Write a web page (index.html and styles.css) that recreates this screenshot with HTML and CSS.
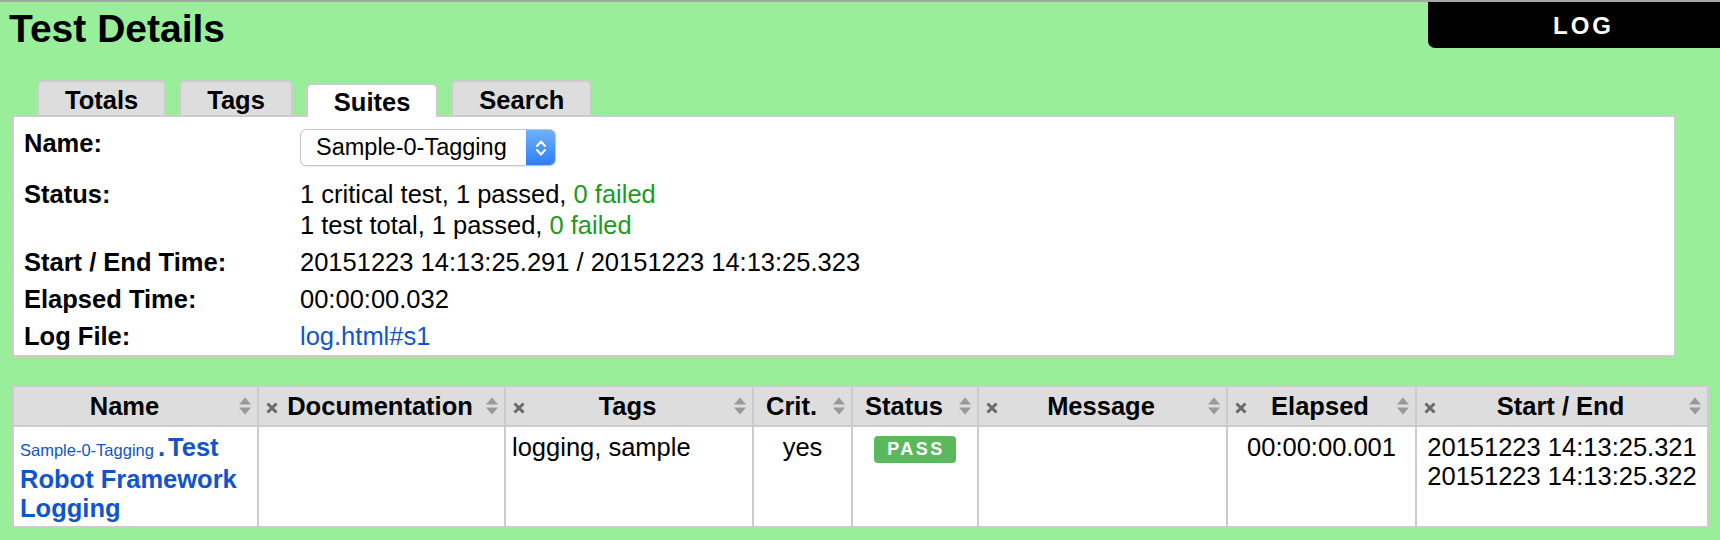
FILE: index.html
```html
<!DOCTYPE html>
<html lang="en">
<head>
<meta charset="utf-8">
<title>Test Details</title>
<link rel="stylesheet" href="styles.css">
</head>
<body>
<header class="topbar">
  <h1 class="title">Test Details</h1>
  <a class="log-link" href="#">LOG</a>
</header>
<nav class="tabs">
  <a class="tab" href="#">Totals</a>
  <a class="tab" href="#">Tags</a>
  <a class="tab active" href="#">Suites</a>
  <a class="tab" href="#">Search</a>
</nav>
<section class="panel">
  <table class="details">
    <tr>
      <th>Name:</th>
      <td>
        <div class="select">
          <span class="select-value">Sample-0-Tagging</span>
          <span class="stepper"><svg width="14" height="24" viewBox="0 0 14 24"><polyline points="3,10 7,5.5 11,10" fill="none" stroke="#fff" stroke-width="2" stroke-linecap="round" stroke-linejoin="round"/><polyline points="3,14 7,18.5 11,14" fill="none" stroke="#fff" stroke-width="2" stroke-linecap="round" stroke-linejoin="round"/></svg></span>
        </div>
      </td>
    </tr>
    <tr>
      <th>Status:</th>
      <td>1 critical test, 1 passed, <span class="pass">0 failed</span><br>1 test total, 1 passed, <span class="pass">0 failed</span></td>
    </tr>
    <tr>
      <th>Start / End Time:</th>
      <td>20151223 14:13:25.291 / 20151223 14:13:25.323</td>
    </tr>
    <tr>
      <th>Elapsed Time:</th>
      <td>00:00:00.032</td>
    </tr>
    <tr>
      <th>Log File:</th>
      <td><a class="link" href="#">log.html#s1</a></td>
    </tr>
  </table>
</section>
<table class="tests">
  <colgroup>
    <col class="c-name"><col class="c-doc"><col class="c-tags"><col class="c-crit"><col class="c-status"><col class="c-msg"><col class="c-elapsed"><col class="c-times">
  </colgroup>
  <thead>
    <tr>
      <th><div class="th"><span class="label">Name</span><svg class="sort" width="14" height="20" viewBox="0 0 14 20"><path d="M1 8.5 L7 1.5 L13 8.5 Z M1 11.5 L7 18.5 L13 11.5 Z" fill="#999"/></svg></div></th>
      <th><div class="th"><svg class="x" width="14" height="14" viewBox="0 0 14 14"><path d="M2.5 2.5 L11.5 11.5 M11.5 2.5 L2.5 11.5" stroke="#6a6a6a" stroke-width="3"/></svg><span class="label">Documentation</span><svg class="sort" width="14" height="20" viewBox="0 0 14 20"><path d="M1 8.5 L7 1.5 L13 8.5 Z M1 11.5 L7 18.5 L13 11.5 Z" fill="#999"/></svg></div></th>
      <th><div class="th"><svg class="x" width="14" height="14" viewBox="0 0 14 14"><path d="M2.5 2.5 L11.5 11.5 M11.5 2.5 L2.5 11.5" stroke="#6a6a6a" stroke-width="3"/></svg><span class="label">Tags</span><svg class="sort" width="14" height="20" viewBox="0 0 14 20"><path d="M1 8.5 L7 1.5 L13 8.5 Z M1 11.5 L7 18.5 L13 11.5 Z" fill="#999"/></svg></div></th>
      <th><div class="th"><span class="label">Crit.</span><svg class="sort" width="14" height="20" viewBox="0 0 14 20"><path d="M1 8.5 L7 1.5 L13 8.5 Z M1 11.5 L7 18.5 L13 11.5 Z" fill="#999"/></svg></div></th>
      <th><div class="th"><span class="label">Status</span><svg class="sort" width="14" height="20" viewBox="0 0 14 20"><path d="M1 8.5 L7 1.5 L13 8.5 Z M1 11.5 L7 18.5 L13 11.5 Z" fill="#999"/></svg></div></th>
      <th><div class="th"><svg class="x" width="14" height="14" viewBox="0 0 14 14"><path d="M2.5 2.5 L11.5 11.5 M11.5 2.5 L2.5 11.5" stroke="#6a6a6a" stroke-width="3"/></svg><span class="label">Message</span><svg class="sort" width="14" height="20" viewBox="0 0 14 20"><path d="M1 8.5 L7 1.5 L13 8.5 Z M1 11.5 L7 18.5 L13 11.5 Z" fill="#999"/></svg></div></th>
      <th><div class="th"><svg class="x" width="14" height="14" viewBox="0 0 14 14"><path d="M2.5 2.5 L11.5 11.5 M11.5 2.5 L2.5 11.5" stroke="#6a6a6a" stroke-width="3"/></svg><span class="label">Elapsed</span><svg class="sort" width="14" height="20" viewBox="0 0 14 20"><path d="M1 8.5 L7 1.5 L13 8.5 Z M1 11.5 L7 18.5 L13 11.5 Z" fill="#999"/></svg></div></th>
      <th><div class="th"><svg class="x" width="14" height="14" viewBox="0 0 14 14"><path d="M2.5 2.5 L11.5 11.5 M11.5 2.5 L2.5 11.5" stroke="#6a6a6a" stroke-width="3"/></svg><span class="label">Start / End</span><svg class="sort" width="14" height="20" viewBox="0 0 14 20"><path d="M1 8.5 L7 1.5 L13 8.5 Z M1 11.5 L7 18.5 L13 11.5 Z" fill="#999"/></svg></div></th>
    </tr>
  </thead>
  <tbody>
    <tr>
      <td><a class="test-link" href="#"><span class="parent">Sample-0-Tagging</span><span class="dot">.</span>Test Robot Framework Logging</a></td>
      <td></td>
      <td>logging, sample</td>
      <td class="center">yes</td>
      <td class="center"><span class="badge">PASS</span></td>
      <td></td>
      <td class="center">00:00:00.001</td>
      <td class="center">20151223 14:13:25.321<br>20151223 14:13:25.322</td>
    </tr>
  </tbody>
</table>
</body>
</html>
```
FILE: styles.css
```css
html, body {
  margin: 0;
  padding: 0;
}

body {
  width: 1720px;
  min-height: 538px;
  background: #99ee99;
  border-top: 2px solid #a6a6a6;
  font-family: "Liberation Sans", Arial, Helvetica, sans-serif;
  font-size: 25.5px;
  color: #000;
}

.topbar {
  display: flex;
  justify-content: space-between;
  align-items: flex-start;
  height: 78px;
}

.title {
  margin: 0;
  padding: 7px 0 0 9px;
  font-size: 39px;
  line-height: 39px;
  font-weight: bold;
}

.log-link {
  display: block;
  width: 292px;
  height: 46px;
  box-sizing: border-box;
  padding-left: 19px;
  background: #000;
  color: #fff;
  border-bottom-left-radius: 7px;
  text-decoration: none;
  text-align: center;
  font-weight: bold;
  font-size: 24px;
  letter-spacing: 3px;
  line-height: 47px;
  overflow: hidden;
}

/* tabs */
.tabs {
  position: relative;
  z-index: 1;
  display: flex;
  align-items: flex-end;
  height: 37px;
  padding-left: 37px;
  margin-bottom: -2px;
}

.tab {
  display: block;
  margin: 0 13px 2px 0;
  padding: 3px 26px 0;
  border: 2px solid #cccccc;
  border-bottom: 0;
  border-radius: 6px 6px 0 0;
  background: #dddddd;
  color: #000;
  text-decoration: none;
  font-weight: bold;
  line-height: 30px;
}

.tab.active {
  background: #fff;
  margin-bottom: 0;
  padding-top: 2px;
  padding-bottom: 0;
}

/* details panel */
.panel {
  width: 1664px;
  box-sizing: border-box;
  margin: 0 0 28px 12px;
  padding: 8px 10px 0;
  border: 2px solid #cccccc;
  background: #fff;
}

.details {
  border-collapse: collapse;
}

.details th,
.details td {
  padding: 3px 0;
  line-height: 31px;
  vertical-align: top;
  text-align: left;
}

.details th {
  width: 276px;
  font-weight: bold;
}

.pass {
  color: #229922;
}

.link {
  color: #1155cc;
  text-decoration: none;
}

.select {
  display: flex;
  width: 256px;
  height: 37px;
  box-sizing: border-box;
  margin: 1px 0 7px;
  border: 1px solid #c6c6c6;
  border-radius: 6px;
  background: #fff;
  box-shadow: 0 1px 1px rgba(0, 0, 0, 0.08);
  overflow: hidden;
  font-size: 23.5px;
  line-height: 35px;
}

.select-value {
  flex: 1;
  padding-left: 15px;
}

.stepper {
  width: 29px;
  display: flex;
  align-items: center;
  justify-content: center;
  background: linear-gradient(#6fb2fb, #2f7df4);
}

/* tests table */
.tests {
  table-layout: fixed;
  width: 1697px;
  margin-left: 12px;
  border-collapse: separate;
  border-spacing: 0;
  border-left: 2px solid #cccccc;
  border-top: 2px solid #cccccc;
  background: #fff;
}

.c-name { width: 245px; }
.c-doc { width: 247px; }
.c-tags { width: 248px; }
.c-crit { width: 99px; }
.c-status { width: 126px; }
.c-msg { width: 249px; }
.c-elapsed { width: 189px; }
.c-times { width: 292px; }

.tests th,
.tests td {
  padding: 0;
  border-right: 2px solid #cccccc;
  border-bottom: 2px solid #cccccc;
}

.tests th {
  background: #dddddd;
  font-weight: bold;
}

.th {
  display: flex;
  align-items: center;
  height: 38px;
  padding: 0 5px 0 6px;
  line-height: 38px;
}

.th .x {
  flex: none;
  margin: 4px 5px 0 0;
}

.th .label {
  flex: 1;
  text-align: center;
  white-space: nowrap;
  overflow: hidden;
}

.th .sort {
  flex: none;
  margin-left: 9px;
}

.tests td {
  vertical-align: top;
  padding: 6px 6px 3px;
  line-height: 29px;
}

.tests td.center {
  text-align: center;
}

.test-link {
  color: #1155cc;
  font-weight: bold;
  text-decoration: none;
}

.parent {
  font-weight: normal;
  font-size: 16.5px;
}

.dot {
  margin: 0 3px 0 4px;
}

.badge {
  display: inline-block;
  vertical-align: middle;
  padding: 0 11px 0 13px;
  border-radius: 4px;
  background: #5cb85c;
  color: #fff;
  font-weight: bold;
  font-size: 18px;
  letter-spacing: 2.5px;
  line-height: 27px;
}
```
